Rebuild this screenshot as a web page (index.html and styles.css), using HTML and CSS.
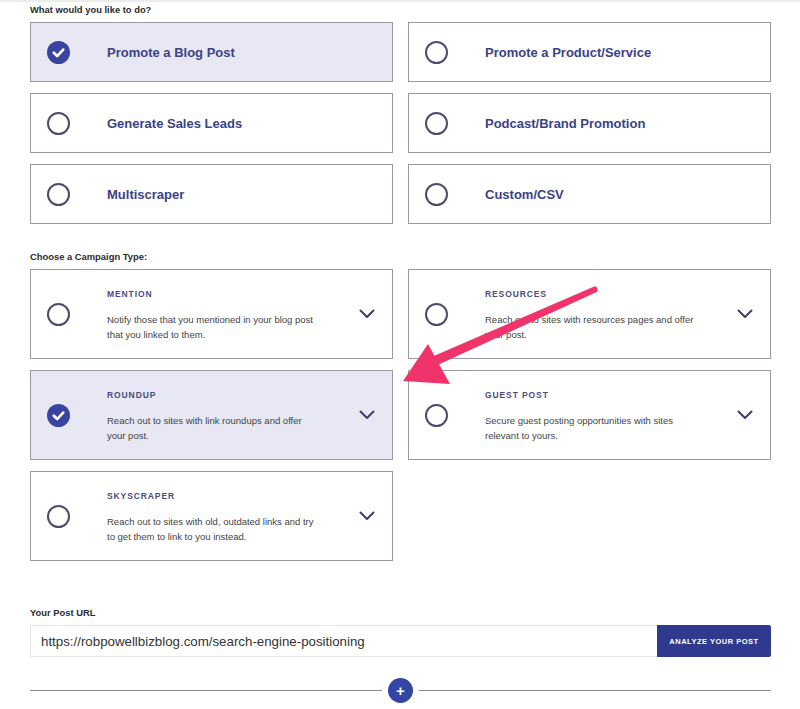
FILE: index.html
```html
<!DOCTYPE html>
<html lang="en">
<head>
    <meta charset="UTF-8">
    <title>New Campaign</title>
    <link rel="stylesheet" href="styles.css">
</head>
<body>
    <div class="page">
        <div class="section">
            <p class="field-label">What would you like to do?</p>
            <div class="option-grid">
                <div class="option selected">
                    <span class="check"><svg viewBox="0 0 22 22"><path d="M6.5 11.3l3.2 3.1 5.8-6.2" /></svg></span>
                    <span class="option-name">Promote a Blog Post</span>
                </div>
                <div class="option">
                    <span class="radio"></span>
                    <span class="option-name">Promote a Product/Service</span>
                </div>
                <div class="option">
                    <span class="radio"></span>
                    <span class="option-name">Generate Sales Leads</span>
                </div>
                <div class="option">
                    <span class="radio"></span>
                    <span class="option-name">Podcast/Brand Promotion</span>
                </div>
                <div class="option">
                    <span class="radio"></span>
                    <span class="option-name">Multiscraper</span>
                </div>
                <div class="option">
                    <span class="radio"></span>
                    <span class="option-name">Custom/CSV</span>
                </div>
            </div>
        </div>

        <div class="section">
            <p class="field-label">Choose a Campaign Type:</p>
            <div class="option-grid">
                <div class="option campaign">
                    <span class="radio"></span>
                    <div class="campaign-text">
                        <h4>Mention</h4>
                        <p>Notify those that you mentioned in your blog post that you linked to them.</p>
                    </div>
                    <svg class="chevron" viewBox="0 0 16 10"><path d="M1.5 1.5l6.5 6.5 6.5-6.5" /></svg>
                </div>
                <div class="option campaign">
                    <span class="radio"></span>
                    <div class="campaign-text">
                        <h4>Resources</h4>
                        <p>Reach out to sites with resources pages and offer your post.</p>
                    </div>
                    <svg class="chevron" viewBox="0 0 16 10"><path d="M1.5 1.5l6.5 6.5 6.5-6.5" /></svg>
                </div>
                <div class="option campaign selected">
                    <span class="check"><svg viewBox="0 0 22 22"><path d="M6.5 11.3l3.2 3.1 5.8-6.2" /></svg></span>
                    <div class="campaign-text">
                        <h4>Roundup</h4>
                        <p>Reach out to sites with link roundups and offer your post.</p>
                    </div>
                    <svg class="chevron" viewBox="0 0 16 10"><path d="M1.5 1.5l6.5 6.5 6.5-6.5" /></svg>
                </div>
                <div class="option campaign">
                    <span class="radio"></span>
                    <div class="campaign-text">
                        <h4>Guest Post</h4>
                        <p>Secure guest posting opportunities with sites relevant to yours.</p>
                    </div>
                    <svg class="chevron" viewBox="0 0 16 10"><path d="M1.5 1.5l6.5 6.5 6.5-6.5" /></svg>
                </div>
                <div class="option campaign">
                    <span class="radio"></span>
                    <div class="campaign-text">
                        <h4>Skyscraper</h4>
                        <p>Reach out to sites with old, outdated links and try to get them to link to you instead.</p>
                    </div>
                    <svg class="chevron" viewBox="0 0 16 10"><path d="M1.5 1.5l6.5 6.5 6.5-6.5" /></svg>
                </div>
            </div>
        </div>

        <div class="section url-section">
            <p class="field-label">Your Post URL</p>
            <div class="url-row">
                <input class="url-input" type="text" value="https://robpowellbizblog.com/search-engine-positioning">
                <button class="btn-analyze">Analyze Your Post</button>
            </div>
        </div>

        <div class="divider">
            <span class="line"></span>
            <span class="add-btn">+</span>
            <span class="line"></span>
        </div>

        <!-- annotation arrow drawn over the screenshot -->
        <svg class="annotation" viewBox="0 0 800 709">
            <path d="M594.8 286.3 Q598.5 287 597.2 291.7 L432 367.6 L428 358.4 Z" fill="#f0336a" />
            <path d="M403 381 L428 344 L450 384 Z" fill="#f0336a" />
        </svg>
    </div>
</body>
</html>
```

FILE: styles.css
```css
* {
    margin: 0;
    padding: 0;
    box-sizing: border-box;
}

body {
    font-family: "Liberation Sans", Arial, sans-serif;
    background: #fff;
    color: #333;
    border-top: 2px solid #ececec;
}

.page {
    position: relative;
    width: 800px;
    padding: 0 29px 0 30px;
}

.field-label {
    font-size: 9.4px;
    font-weight: 700;
    color: #2b2b2b;
    line-height: 12px;
    padding-top: 2px;
    margin-bottom: 6px;
}

.section + .section {
    margin-top: 25px;
}

.option-grid {
    display: grid;
    grid-template-columns: 1fr 1fr;
    column-gap: 15px;
    row-gap: 11px;
}

.option {
    display: flex;
    align-items: center;
    height: 60px;
    border: 1px solid #9a9aa2;
    background: #fff;
    padding-left: 16px;
}

.option.selected {
    background: #e7e8f3;
}

.radio {
    flex: none;
    width: 23px;
    height: 23px;
    border: 2px solid #4b4b6e;
    border-radius: 50%;
}

.check {
    flex: none;
    width: 23px;
    height: 23px;
    border-radius: 50%;
    background: #3a43a0;
    display: flex;
}

.check svg {
    width: 23px;
    height: 23px;
    fill: none;
    stroke: #fff;
    stroke-width: 2.6;
    stroke-linecap: round;
    stroke-linejoin: round;
}

.option-name {
    margin-left: 37px;
    font-size: 13px;
    font-weight: 700;
    color: #3b4285;
}

.option.campaign {
    height: 90px;
    padding-right: 17px;
}

.campaign-text {
    margin-left: 37px;
    padding-top: 2px;
    flex: 1;
}

.campaign-text h4 {
    font-size: 8.5px;
    font-weight: 700;
    letter-spacing: 0.9px;
    text-transform: uppercase;
    color: #4a4c80;
    margin-bottom: 13px;
}

.campaign-text p {
    font-size: 9.5px;
    line-height: 15px;
    color: #444;
    max-width: 215px;
}

.chevron {
    flex: none;
    width: 16px;
    height: 10px;
    fill: none;
    stroke: #3b3f6e;
    stroke-width: 2;
    stroke-linecap: round;
    stroke-linejoin: round;
}

.url-section {
    margin-top: 44px !important;
}

.url-row {
    display: flex;
    height: 32px;
}

.url-input {
    flex: 1;
    border: 1px solid #e6e6e6;
    border-right: none;
    padding-left: 10px;
    font-family: "Liberation Sans", Arial, sans-serif;
    font-size: 13.3px;
    color: #333;
    outline: none;
}

.btn-analyze {
    width: 114px;
    border: none;
    border-radius: 0 2px 2px 0;
    background: #2f3a8e;
    color: #fff;
    font-family: "Liberation Sans", Arial, sans-serif;
    font-size: 7.5px;
    font-weight: 700;
    letter-spacing: 0.5px;
    text-transform: uppercase;
}

.divider {
    display: flex;
    align-items: center;
    gap: 6px;
    margin-top: 21px;
}

.divider .line {
    flex: 1;
    height: 1px;
    background: #8a8a8a;
}

.add-btn {
    width: 25px;
    height: 25px;
    border-radius: 50%;
    background: #3346a6;
    color: #fff;
    font-size: 15px;
    font-weight: 700;
    line-height: 25px;
    text-align: center;
}

.annotation {
    position: absolute;
    left: 0;
    top: -2px;
    width: 800px;
    height: 709px;
    pointer-events: none;
}
```
